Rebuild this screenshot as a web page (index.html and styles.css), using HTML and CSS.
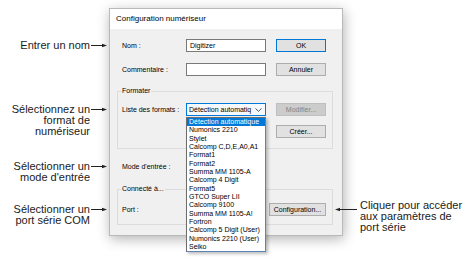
FILE: index.html
```html
<!DOCTYPE html>
<html lang="fr">
<head>
    <meta charset="UTF-8">
    <title>Configuration numériseur</title>
    <link rel="stylesheet" href="styles.css">
</head>
<body>
<div class="scene">
    <div class="notes-left">
        <div class="note n-nom">
            <div class="note-text">Entrer un nom</div>
            <svg width="16" height="5" viewBox="0 0 16 5"><line x1="0" y1="2.5" x2="12" y2="2.5" stroke="#222" stroke-width="1"/><polygon points="11,0.8 16,2.5 11,4.2" fill="#222"/></svg>
        </div>
        <div class="note n-format">
            <div class="note-text">Sélectionnez un<br>format de<br>numériseur</div>
            <svg width="16" height="5" viewBox="0 0 16 5"><line x1="0" y1="2.5" x2="12" y2="2.5" stroke="#222" stroke-width="1"/><polygon points="11,0.8 16,2.5 11,4.2" fill="#222"/></svg>
        </div>
        <div class="note n-mode">
            <div class="note-text">Sélectionner un<br>mode d'entrée</div>
            <svg width="16" height="5" viewBox="0 0 16 5"><line x1="0" y1="2.5" x2="12" y2="2.5" stroke="#222" stroke-width="1"/><polygon points="11,0.8 16,2.5 11,4.2" fill="#222"/></svg>
        </div>
        <div class="note n-port">
            <div class="note-text">Sélectionner un<br>port série COM</div>
            <svg width="16" height="5" viewBox="0 0 16 5"><line x1="0" y1="2.5" x2="12" y2="2.5" stroke="#222" stroke-width="1"/><polygon points="11,0.8 16,2.5 11,4.2" fill="#222"/></svg>
        </div>
    </div>

    <div class="dialog">
        <div class="titlebar">Configuration numériseur</div>
        <div class="dialog-body">
            <div class="row">
                <span class="label">Nom :</span>
                <div class="textbox">Digitizer</div>
                <span></span>
                <div class="btn btn-default">OK</div>
            </div>
            <div class="row row-gap">
                <span class="label">Commentaire :</span>
                <div class="textbox"></div>
                <span></span>
                <div class="btn">Annuler</div>
            </div>

            <fieldset class="group group-format">
                <legend>Formater</legend>
                <div class="row">
                    <span class="label">Liste des formats :</span>
                    <div class="combo-wrap">
                        <div class="combo">
                            <span class="combo-text">Détection automatiq</span>
                            <svg width="7" height="4" viewBox="0 0 7 4"><polyline points="0.5,0.5 3.5,3.3 6.5,0.5" fill="none" stroke="#444" stroke-width="0.9"/></svg>
                        </div>
                        <ul class="droplist">
                            <li class="selected">Détection automatique</li>
                            <li>Numonics 2210</li>
                            <li>Stylet</li>
                            <li>Calcomp C,D,E,A0,A1</li>
                            <li>Format1</li>
                            <li>Format2</li>
                            <li>Summa MM 1105-A</li>
                            <li>Calcomp 4 Digit</li>
                            <li>Format5</li>
                            <li>GTCO Super LII</li>
                            <li>Calcomp 9100</li>
                            <li>Summa MM 1105-A!</li>
                            <li>Fortron</li>
                            <li>Calcomp 5 Digit (User)</li>
                            <li>Numonics 2210 (User)</li>
                            <li>Seiko</li>
                        </ul>
                    </div>
                    <span></span>
                    <div class="btn btn-disabled">Modifier...</div>
                </div>
                <div class="row row-creer">
                    <span></span>
                    <span></span>
                    <span></span>
                    <div class="btn">Créer...</div>
                </div>
            </fieldset>

            <div class="row row-mode">
                <span class="label">Mode d'entrée :</span>
            </div>

            <fieldset class="group group-port">
                <legend>Connecté à...</legend>
                <div class="row row-config">
                    <span class="label">Port :</span>
                    <span></span>
                    <div class="btn">Configuration...</div>
                </div>
            </fieldset>
        </div>
    </div>

    <div class="notes-right">
        <svg width="22" height="5" viewBox="0 0 22 5"><polygon points="0,2.5 5,0.8 5,4.2" fill="#222"/><line x1="4" y1="2.5" x2="22" y2="2.5" stroke="#222" stroke-width="1"/></svg>
        <div class="note-text-right">Cliquer pour accéder<br>aux paramètres de<br>port série</div>
    </div>
</div>
</body>
</html>
```

FILE: styles.css
```css
* {
    box-sizing: border-box;
}

body {
    margin: 0;
    background: #fff;
    font-family: "Liberation Sans", Arial, sans-serif;
}

.scene {
    display: flex;
    width: 468px;
    height: 271px;
    overflow: hidden;
}

/* callouts on the left */
.notes-left {
    width: 109px;
    flex: none;
    font-size: 11px;
    line-height: 11px;
    color: #1a1a1a;
}
.note {
    display: flex;
    justify-content: flex-end;
    padding-right: 2px;
}
.note-text {
    text-align: right;
}
.note svg {
    flex: none;
    margin-top: 3px;
    margin-left: 1px;
}
.n-nom { margin-top: 40px; }
.n-format { margin-top: 53px; }
.n-mode { margin-top: 24px; }
.n-port { margin-top: 21px; }

/* dialog window */
.dialog {
    flex: none;
    margin-top: 8px;
    width: 234px;
    height: 228px;
    border: 1px solid #b9b9b9;
    background: #f0f0f0;
    box-shadow: 1px 3px 12px rgba(0, 0, 0, 0.3);
    font-size: 7px;
    color: #000;
    position: relative;
}
.titlebar {
    height: 20px;
    background: #fff;
    font-size: 8px;
    line-height: 20px;
    padding-left: 6px;
}
.dialog-body {
    padding: 10px 9px 0 7px;
}

.row {
    display: grid;
    grid-template-columns: 64px 80px 10px 50px;
    height: 13px;
    padding-left: 5px;
    align-items: center;
}
.row-gap { margin-top: 11px; }
.row-creer { margin-top: 9px; }
.row-mode { margin-top: 11px; }
.row-config {
    grid-template-columns: 64px 83px 57px;
    margin-top: 10px;
}

.label {
    white-space: nowrap;
    line-height: 13px;
}

.textbox {
    height: 13px;
    background: #fff;
    border: 1px solid #7a7a7a;
    padding-left: 3px;
    line-height: 11px;
}

.btn {
    height: 13px;
    background: #e1e1e1;
    border: 1px solid #adadad;
    text-align: center;
    line-height: 11px;
    white-space: nowrap;
}
.btn-default {
    border-color: #0078d7;
}
.btn-disabled {
    background: #cccccc;
    border-color: #bfbfbf;
    color: #838383;
}

/* group boxes */
.group {
    margin: 11px 0 0 0;
    padding: 0 0 10px 3px;
    border: 1px solid #dcdcdc;
    min-width: 0;
}
.group legend {
    padding: 0 1px;
    line-height: 8px;
    font-size: 7px;
}
.group .row {
    padding-left: 1px;
}
.group-format .row:first-of-type {
    margin-top: 8px;
}
.group-port {
    margin-top: 12px;
    padding-bottom: 8px;
}

/* combo + open list */
.combo-wrap {
    position: relative;
    height: 13px;
}
.combo {
    display: flex;
    align-items: center;
    justify-content: space-between;
    height: 13px;
    background: #f4f9fd;
    border: 1px solid #0078d7;
    padding: 0 3px 0 2px;
}
.combo-text {
    white-space: nowrap;
    line-height: 11px;
}
.droplist {
    position: absolute;
    top: 14px;
    left: 0;
    width: 80px;
    margin: 0;
    padding: 0;
    list-style: none;
    background: #fff;
    border: 1px solid #5b84b8;
    border-left-color: #6d6d6d;
    border-top-color: #6d6d6d;
    box-shadow: 2px 2px 3px rgba(0, 0, 0, 0.25);
    z-index: 2;
}
.droplist li {
    height: 8.33px;
    line-height: 8.33px;
    padding-left: 2px;
    white-space: nowrap;
}
.droplist li.selected {
    background: #0078d7;
    color: #fff;
}

/* callout on the right */
.notes-right {
    display: flex;
    align-items: flex-start;
    margin-left: -8px;
    margin-top: 200px;
    font-size: 11px;
    line-height: 11px;
    color: #1a1a1a;
    position: relative;
    z-index: 1;
}
.notes-right svg {
    flex: none;
    margin-top: 7px;
}
.note-text-right {
    margin-left: 3px;
    white-space: nowrap;
}
```
